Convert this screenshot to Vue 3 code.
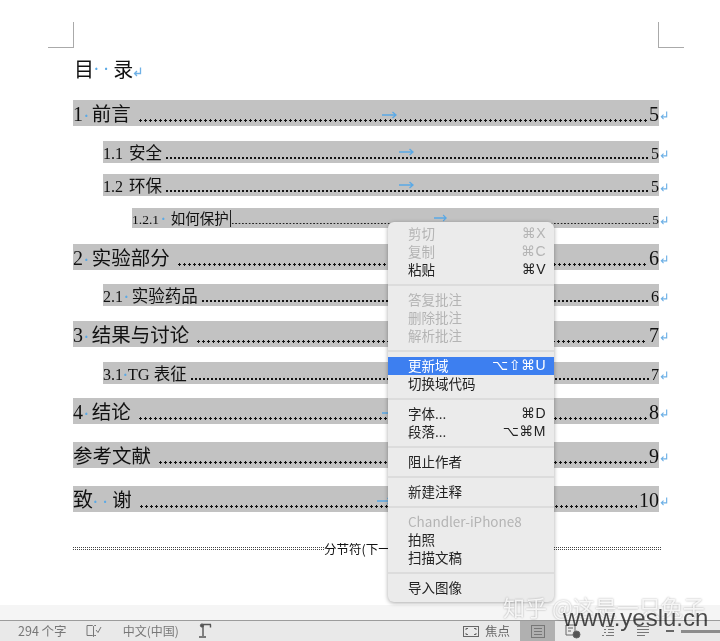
<script setup>
const rows = [
  { label: '1', sep: '·', text: '前言', page: '5', level: 1, top: 0, arrow: 309 },
  { label: '1.1', sep: '', text: '安全', page: '5', level: 2, top: 15, arrow: 296 },
  { label: '1.2', sep: '', text: '环保', page: '5', level: 2, top: 11, arrow: 296 },
  { label: '1.2.1', sep: '·', text: '如何保护', page: '5', level: 3, top: 12, arrow: 302, caret: true },
  { label: '2', sep: '·', text: '实验部分', page: '6', level: 1, top: 16 },
  { label: '2.1', sep: '·', text: '实验药品', page: '6', level: 2, top: 14 },
  { label: '3', sep: '·', text: '结果与讨论', page: '7', level: 1, top: 15 },
  { label: '3.1', sep: '·', text: 'TG 表征', page: '7', level: 2, top: 15, tight: true },
  { label: '4', sep: '·', text: '结论', page: '8', level: 1, top: 14, arrow: 309 },
  { label: '', sep: '', text: '参考文献', page: '9', level: 1, top: 18 },
  { label: '致', sep: '··', text: '谢', page: '10', level: 1, top: 18, arrow: 304, wide: true },
]

const menu = [
  [
    { t: '剪切', k: '⌘X', off: true },
    { t: '复制', k: '⌘C', off: true },
    { t: '粘贴', k: '⌘V' },
  ],
  [
    { t: '答复批注', off: true },
    { t: '删除批注', off: true },
    { t: '解析批注', off: true },
  ],
  [
    { t: '更新域', k: '⌥⇧⌘U', active: true },
    { t: '切换域代码' },
  ],
  [
    { t: '字体...', k: '⌘D' },
    { t: '段落...', k: '⌥⌘M' },
  ],
  [{ t: '阻止作者' }],
  [{ t: '新建注释' }],
  [
    { t: 'Chandler-iPhone8', off: true },
    { t: '拍照' },
    { t: '扫描文稿' },
  ],
  [{ t: '导入图像' }],
]
</script>

<template>
  <div class="app">
    <div class="doc">
      <div class="corners">
        <i class="corner left"></i>
        <i class="corner right"></i>
      </div>
      <div class="title">
        <span>目</span><span class="mark wide">··</span><span>录</span>
        <svg class="ret" width="9" height="10" viewBox="0 0 9 10" fill="none" stroke="#6fb1e6" stroke-width="1.3">
          <path d="M7.5 .5V6.5H1.5M4 4L1.5 6.5 4 9" />
        </svg>
      </div>
      <div class="toc">
        <div
          v-for="(r, i) in rows"
          :key="i"
          class="row"
          :class="'level' + r.level"
          :style="{ marginTop: r.top + 'px' }"
        >
          <div class="fill">
            <span v-if="r.label" class="label">{{ r.label }}</span>
            <span v-if="r.sep" class="mark" :class="{ wide: r.wide, tight: r.tight }">{{ r.sep }}</span>
            <span class="name" :class="{ spaced: !r.sep && r.level == 2 }">{{ r.text }}</span>
            <span v-if="r.caret" class="caret"></span>
            <span class="dots" :class="{ after: !r.caret }"></span>
            <span class="page">{{ r.page }}</span>
            <svg
              v-if="r.arrow"
              class="arrow"
              :style="{ left: r.arrow + 'px' }"
              height="8"
              viewBox="0 0 15 8"
              preserveAspectRatio="none"
              fill="none"
              stroke="#5aa9e6"
              stroke-width="1.4"
            >
              <path d="M0 4H14M10.5 1L14 4 10.5 7" />
            </svg>
          </div>
          <svg class="ret" width="8" height="9" viewBox="0 0 9 10" fill="none" stroke="#6fb1e6" stroke-width="1.3">
            <path d="M7.5 .5V6.5H1.5M4 4L1.5 6.5 4 9" />
          </svg>
        </div>
      </div>
      <div class="section">
        <i class="rule first"></i>
        <span>分节符(下一页)</span>
        <i class="rule"></i>
      </div>
    </div>

    <div class="status">
      <div class="status-left">
        <span>294 个字</span>
        <svg width="16" height="14" viewBox="0 0 16 14" fill="none" stroke="#777">
          <path d="M1 1.5h5.5l1 1v10l-1-1H1zM7.5 2.5l1-1H10M7.5 12.5l1-1H10" />
          <path d="M10 6l2 2.5L15 3" />
        </svg>
        <span class="lang">中文(中国)</span>
        <svg width="15" height="16" viewBox="0 0 15 16" fill="#555" stroke="#555">
          <circle cx="4" cy="2.5" r="1.6" />
          <path d="M5 3v10M1 14h7M5 1.5h8M12.5 1.5v3" fill="none" stroke-width="1.4" />
        </svg>
      </div>
      <div class="status-right">
        <svg width="16" height="11" viewBox="0 0 16 11" fill="none" stroke="#666">
          <rect x=".5" y=".5" width="15" height="10" />
          <path d="M3 4V2.5h2M11 2.5h2V4M13 7v1.5h-2M5 8.5H3V7" />
        </svg>
        <span class="focus-text">焦点</span>
        <span class="view on">
          <svg width="14" height="13" viewBox="0 0 14 13" fill="none" stroke="#777">
            <rect x=".5" y=".5" width="13" height="12" />
            <path d="M3 3.5h8M3 6.5h8M3 9.5h8" />
          </svg>
        </span>
        <span class="view">
          <svg width="16" height="15" viewBox="0 0 16 15" fill="none" stroke="#666">
            <path d="M1 1h9v10H1zM3 4h5M3 7h3" />
            <circle cx="11.5" cy="10.5" r="3.5" fill="#555" />
          </svg>
        </span>
        <span class="view">
          <svg width="14" height="12" viewBox="0 0 14 12" fill="none" stroke="#777">
            <path d="M1 1.5h2M5 1.5h8M3 4.5h2M7 4.5h6M3 7.5h2M7 7.5h6M1 10.5h2M5 10.5h8" />
          </svg>
        </span>
        <span class="view">
          <svg width="14" height="12" viewBox="0 0 14 12" fill="none" stroke="#777">
            <path d="M1 1.5h12M1 4.5h12M1 7.5h12M1 10.5h8" />
          </svg>
        </span>
        <span class="zoom-minus"></span>
        <span class="zoom-track"></span>
      </div>
    </div>

    <div class="menu">
      <div v-for="(group, g) in menu" :key="g" class="group">
        <div
          v-for="item in group"
          :key="item.t"
          class="item"
          :class="{ off: item.off, active: item.active }"
        >
          <span>{{ item.t }}</span>
          <span v-if="item.k" class="key">{{ item.k }}</span>
        </div>
      </div>
    </div>

    <div class="mark-zhihu">知乎 @这是一只兔子</div>
    <div class="mark-site">www.yeslu.cn</div>
  </div>
</template>

<style scoped>
.app {
  position: relative;
  width: 720px;
  height: 641px;
  display: flex;
  flex-direction: column;
  overflow: hidden;
  background: #fff;
  color: #111;
  font-family: "Liberation Serif", "Noto Sans CJK SC", serif;
  filter: blur(0.4px);
}
.doc {
  flex: 1;
  padding: 0 61px 0 73px;
  min-height: 0;
}
.corners {
  display: flex;
  justify-content: space-between;
  height: 47px;
  margin: 0 -25px;
  padding-top: 22px;
  box-sizing: border-box;
}
.corner {
  display: block;
  width: 25px;
  height: 25px;
  border-bottom: 1px solid #aaa;
}
.corner.left {
  border-right: 1px solid #aaa;
}
.corner.right {
  border-left: 1px solid #aaa;
}
.title {
  display: flex;
  align-items: center;
  margin: 9px 0 0 1px;
  height: 28px;
  padding-bottom: 16px;
  font-size: 20px;
  line-height: 28px;
}
.title .ret {
  margin: 4px 0 0 0;
}
.mark {
  color: #5aa9e6;
  font-size: 14px;
  font-weight: bold;
  margin: 0 3px 0 1px;
}
.mark.wide {
  letter-spacing: 5px;
  margin: 0;
}
.mark.tight {
  margin: 0;
}
.row {
  display: flex;
  align-items: center;
}
.fill {
  position: relative;
  flex: 1;
  display: flex;
  align-items: baseline;
  min-width: 0;
  background: #c2c2c2;
  white-space: nowrap;
  overflow: hidden;
}
.row .ret {
  flex: none;
  margin: 4px -9px 0 1px;
}
.level1 .fill {
  height: 26px;
  line-height: 28px;
  font-size: 20px;
}
.level1 .name {
  font-size: 19.5px;
}
.level2 {
  margin-left: 30px;
}
.level2 .fill {
  height: 22px;
  line-height: 25px;
  font-size: 16px;
}
.level2 .name {
  font-size: 16.5px;
}
.level2 .name.spaced {
  margin-left: 6px;
}
.level3 {
  margin-left: 59px;
}
.level3 .fill {
  height: 20px;
  line-height: 22px;
  font-size: 13.5px;
}
.level3 .name {
  font-size: 14.5px;
}
.level3 .mark {
  margin: 0 5px 0 2px;
}
.caret {
  align-self: center;
  flex: none;
  width: 1px;
  height: 17px;
  margin-left: 1px;
  background: #222;
}
.dots {
  flex: 1;
  align-self: stretch;
  min-width: 0;
  background-image: radial-gradient(circle, #111 1px, transparent 1.4px);
  background-repeat: repeat-x;
  background-size: 5px 5px;
  background-position: left bottom 3.5px;
}
.level2 .dots {
  background-size: 4px 4px;
  background-position: left bottom 3px;
}
.level3 .dots {
  background-image: radial-gradient(circle, #222 0.7px, transparent 1.1px);
  background-size: 3.4px 3.4px;
  background-position: left bottom 2.8px;
}
.dots.after {
  margin-left: 7px;
}
.level2 .dots.after {
  margin-left: 3px;
}
.page {
  flex: none;
  margin-left: 2px;
}
.arrow {
  position: absolute;
  top: calc(50% - 2px);
  width: 15px;
}
.level2 .arrow,
.level3 .arrow {
  top: calc(50% - 4px);
}
.level3 .arrow {
  width: 13px;
}
.section {
  display: flex;
  align-items: center;
  margin: 25px -2px 0 0;
  height: 22px;
  font-family: "Noto Sans CJK SC", sans-serif;
  font-size: 12.5px;
}
.rule {
  flex: 1;
  height: 1px;
  border-top: 1px dotted #444;
  border-bottom: 1px dotted #444;
}
.rule.first {
  flex: none;
  width: 251px;
}
.status {
  flex: none;
  height: 36px;
  box-sizing: border-box;
  padding-top: 16px;
  background: linear-gradient(#f5f5f5 0 15px, #9c9c9c 15px 16px, #e9e9e9 16px);
  display: flex;
  justify-content: space-between;
  align-items: center;
  font-family: "Noto Sans CJK SC", sans-serif;
  font-size: 12.5px;
  line-height: 18px;
  color: #777;
}
.status-left {
  display: flex;
  align-items: center;
  gap: 19px;
  padding-left: 18px;
}
.lang {
  margin-left: 2px;
  font-size: 12px;
}
.status-right {
  display: flex;
  align-items: center;
  height: 100%;
}
.focus-text {
  margin: 0 10px 0 6px;
  color: #666;
}
.view {
  width: 35px;
  height: 100%;
  display: flex;
  align-items: center;
  justify-content: center;
}
.view.on {
  background: #b0b0b0;
}
.zoom-minus {
  width: 8px;
  height: 2px;
  margin: 0 7px 0 6px;
  background: #666;
}
.zoom-track {
  width: 39px;
  height: 3px;
  background: #8c8c8c;
}
.menu {
  position: absolute;
  left: 388px;
  top: 222px;
  width: 166px;
  height: 380px;
  box-sizing: border-box;
  padding: 3px 0;
  background: #ebebeb;
  border-radius: 6px;
  box-shadow: 0 1px 4px rgba(0, 0, 0, 0.35);
  font-family: "Noto Sans CJK SC", sans-serif;
  font-size: 13.5px;
  color: #222;
}
.group {
  padding-bottom: 5px;
  margin-bottom: 5px;
  border-bottom: 2px solid #dcdcdc;
}
.group:last-child {
  border-bottom: none;
  margin: 0;
  padding: 0;
}
.item {
  display: flex;
  justify-content: space-between;
  height: 18px;
  line-height: 17px;
  padding: 0 8px 0 20px;
}
.item.off {
  color: #b4b4b4;
}
.item.active {
  background: #3d7ff0;
  color: #fff;
}
.key {
  font-family: "Liberation Sans", "DejaVu Sans", sans-serif;
  font-size: 14px;
  letter-spacing: 0.5px;
}
.mark-zhihu {
  position: absolute;
  left: 503px;
  top: 590px;
  font-family: "Noto Sans CJK SC", sans-serif;
  font-size: 22px;
  line-height: 32px;
  color: rgba(255, 255, 255, 0.85);
  text-shadow: 0 0 2px rgba(0, 0, 0, 0.35);
  white-space: nowrap;
}
.mark-site {
  position: absolute;
  left: 563px;
  top: 602px;
  font-family: "Liberation Sans", sans-serif;
  font-size: 24px;
  line-height: 32px;
  color: rgba(30, 30, 30, 0.8);
  white-space: nowrap;
}
</style>
